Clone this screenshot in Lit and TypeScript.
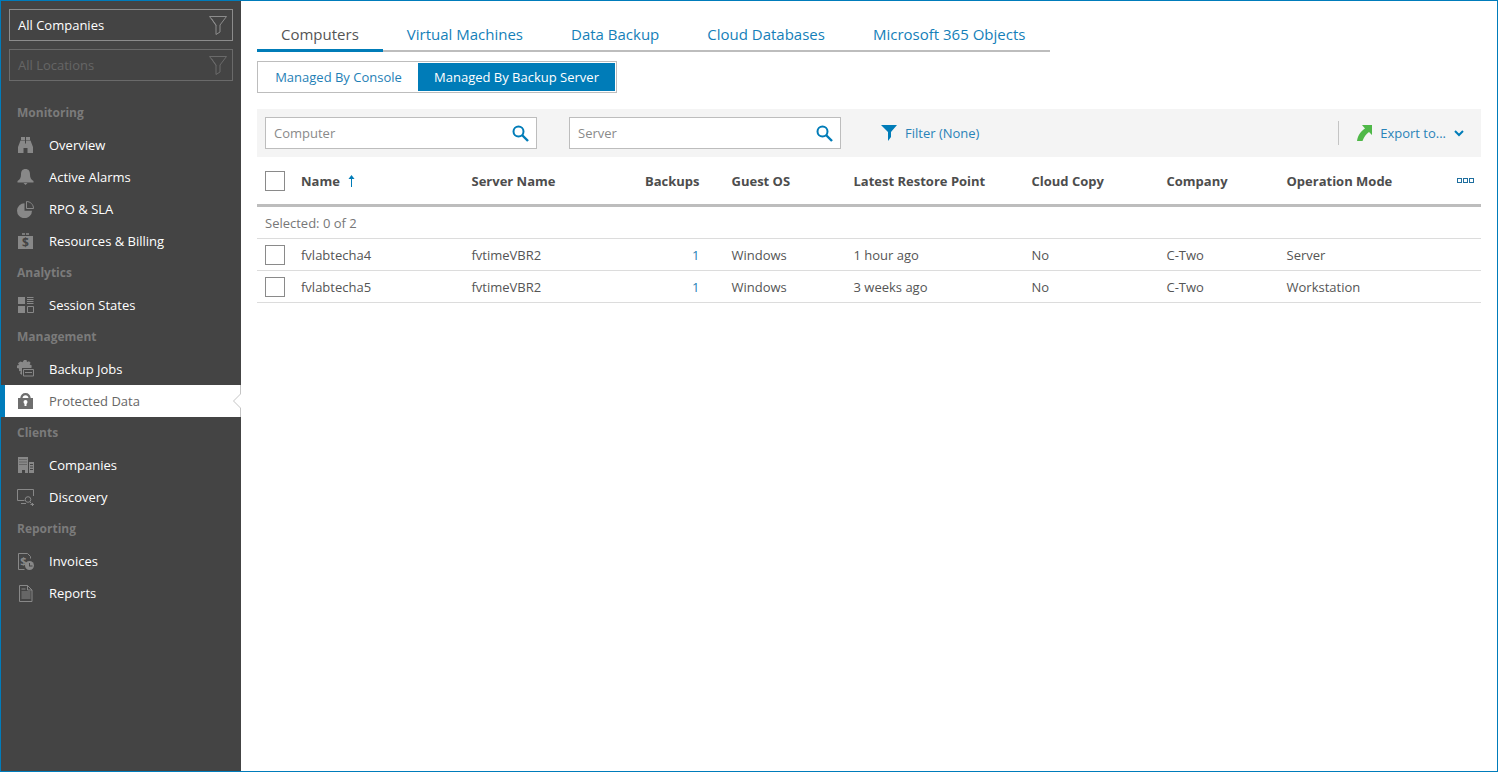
import { LitElement, html, css, svg } from "lit";
import { customElement } from "lit/decorators.js";

const G = "#888888";
const icons: Record<string, unknown> = {
  overview: svg`<path d="M4 1h4v3H4zM9 1h4v3H9z"/><path d="M3.500 4.500h4.500v3h1v-3h4.500L16 11v6h-5.500v-5h-4v5H1v-6z"/>`,
  alarms: svg`<path d="M8.500 1c3.200 0 4.500 2.200 4.500 5.500 0 3 .8 4.700 3.500 6.500v1.500H.5V13C3.200 11.200 4 9.500 4 6.500 4 3.200 5.300 1 8.500 1z"/><path d="M6.500 15h4l-2 2z"/>`,
  rpo: svg`<path d="M7.500 3v7.500H15A7.500 7.500 0 1 1 7.500 3z" transform="translate(0 .200)"/><path d="M9.500 1.500c3.800 0 7 3 7 7h-7z" fill="none" stroke="${G}"/>`,
  billing: svg`<path d="M5 1h3v2H5zM9 1h3v2H9z" opacity=".8"/><path d="M1 4h15v13H1z"/><text x="8.500" y="15" font-size="12" font-family="Open Sans" font-weight="700" text-anchor="middle" fill="#444">$</text>`,
  states: svg`<path d="M1 1h7v7H1zM1 10h7v7H1z"/><path d="M10 1.500h6.500M10 3.500h6.500M10 5.500h6.500M10 7.500h6.500" stroke="${G}" fill="none"/><path d="M10.500 10.500h6v6h-6z" stroke="${G}" fill="none"/>`,
  jobs: svg`<path d="M7 0h2.500l.5 2 2-.8 1.600 1.600-1 1.800 2 .6v2.500l-1.500.5L13 13l-2.500 1-.5 2H7l-.5-2-2 .8L3 13.200l1-1.800-2-.5V8.500l-2-.5V5.500l2-.5-1-1.800L3.500 1.500l2 .8z"/><path d="M5 8h12v9H5z" fill="#444"/><path d="M6.500 9.500h10v6.500h-10z" fill="none" stroke="${G}"/><path d="M8 12.500h7" stroke="${G}" fill="none"/>`,
  lock: svg`<path d="M8.500 1C5.500 1 3.500 3 3.300 6H1v11h15V6h-2.300C13.500 3 11.500 1 8.500 1zm0 2.200c1.600 0 2.800 1.100 3 2.800h-6c.2-1.700 1.400-2.800 3-2.800z"/><circle cx="8.500" cy="10" r="2" fill="#fff"/><path d="M7.500 10h2v4h-2z" fill="#fff"/>`,
  companies: svg`<path d="M1 1h10v16H8v-3H5v3H1zM12 6h5v11h-5z"/><path d="M2.500 3h1v1h-1zM4.500 3h1v1h-1zM6.500 3h1v1h-1zM8.500 3h1v1h-1zM2.500 5.500h1v1h-1zM4.500 5.500h1v1h-1zM6.500 5.500h1v1h-1zM8.500 5.500h1v1h-1zM2.500 8h1v1h-1zM4.500 8h1v1h-1zM6.500 8h1v1h-1zM8.500 8h1v1h-1zM13 8h3v1h-3zM13 10.500h3v1h-3zM13 13h3v1h-3z" fill="#444"/>`,
  discovery: svg`<g fill="none" stroke="${G}"><path d="M16.500 8V1.500H.5v11h7"/><path d="M4 15.500h5"/><circle cx="11" cy="11.500" r="2.800"/><path d="M13 14l1.500 1.500M13.500 16.500h3.500M15.500 15v3"/></g>`,
  invoices: svg`<g fill="none" stroke="${G}"><path d="M7.500 17.500h-6v-16h9l3 3v2"/></g><text x="6.500" y="13" font-size="11" font-family="Open Sans" font-weight="700" text-anchor="middle" fill="${G}">$</text><circle cx="12.500" cy="13.500" r="4.500"/><path d="M12 11h1v2.500h2.500v1H12z" fill="#444"/>`,
  reports: svg`<g fill="none" stroke="${G}"><path d="M2.500 1.500h8l4.500 4.500v11.500H2.500z"/><path d="M10.500 1.500V6H15"/><path d="M4.500 5h4M4.500 8h9M4.500 10h9M4.500 12h9M4.500 14h9" /></g>`,
};

const funnel = svg`<svg class="funnel" width="18" height="19" viewBox="0 0 18 19"><path d="M.500 .500h17L11 9v7l-4 2.500V9zM7 9.500 2.500 2.500" fill="none" stroke="currentColor"/></svg>`;
const search = svg`<svg class="search" width="17" height="17" viewBox="0 0 17 17"><circle cx="6.500" cy="6.500" r="5" fill="none" stroke="#007cb8" stroke-width="2"/><path d="M10 10l6 6" stroke="#007cb8" stroke-width="2.400" fill="none"/></svg>`;

const nav = [
  { group: "Monitoring", items: [["Overview", "overview"], ["Active Alarms", "alarms"], ["RPO & SLA", "rpo"], ["Resources & Billing", "billing"]] },
  { group: "Analytics", items: [["Session States", "states"]] },
  { group: "Management", items: [["Backup Jobs", "jobs"], ["Protected Data", "lock"]] },
  { group: "Clients", items: [["Companies", "companies"], ["Discovery", "discovery"]] },
  { group: "Reporting", items: [["Invoices", "invoices"], ["Reports", "reports"]] },
];

const tabs = ["Computers", "Virtual Machines", "Data Backup", "Cloud Databases", "Microsoft 365 Objects"];
const rows = [
  ["fvlabtecha4", "fvtimeVBR2", "1", "Windows", "1 hour ago", "No", "C-Two", "Server"],
  ["fvlabtecha5", "fvtimeVBR2", "1", "Windows", "3 weeks ago", "No", "C-Two", "Workstation"],
];

@customElement("app-root")
export class AppRoot extends LitElement {
  static styles = css`
    :host { display: block; height: 772px; font-family: "Open Sans", sans-serif; font-size: 13px; color: #555; }
    * { box-sizing: border-box; }
    .window { display: flex; height: 772px; border: 1px solid #007cbb; background: #fff; }
    .side { width: 240px; flex: none; background: #444; padding-top: 8px; }
    .select { display: flex; align-items: center; justify-content: space-between; height: 32px; margin: 0 8px 8px; padding: 0 5px 0 8px; border: 1px solid #8c8c8c; color: #fff; }
    .select.off { border-color: #6a6a6a; color: #666; margin-bottom: 0; }
    .select.off .funnel { color: #6a6a6a; }
    .funnel { color: #8c8c8c; }
    .group, .item { display: flex; align-items: center; height: 32px; }
    .nav { padding-top: 16px; }
    .group { padding: 0 0 1px 16px; color: #7b7b7b; font-weight: 700; font-size: 12px; }
    .item { padding-left: 16px; color: #fff; position: relative; }
    .item > svg.ico { width: 17px; height: 18px; margin-right: 15px; fill: #888888; flex: none; }
    .item.on { background: #fff; color: #666; border-left: 4px solid #007cbb; padding-left: 12px; }
    .item.on > svg.ico { fill: #6e6e6e; }
    .notch { position: absolute; right: 0; top: 0; width: 9px; height: 32px; }
    .main { flex: 1; min-width: 0; padding: 18px 16px 0; }
    .tabs { display: inline-flex; height: 33px; border-bottom: 2px solid #bdbdbd; padding-right: 1px; }
    .tab { padding: 5px 24px 0; font-size: 15px; color: #157fb9; height: 33px; }
    .tab.on { color: #555; border-bottom: 3px solid #007cb8; }
    .toggle { display: flex; width: 360px; height: 32px; margin-top: 9px; padding: 1px; border: 1px solid #bdbdbd; }
    .toggle div { display: flex; align-items: center; justify-content: center; color: #1f7fb6; width: 159px; }
    .toggle div.on { width: 197px; background: #007cb8; color: #fff; }
    .bar { display: flex; align-items: center; height: 48px; margin-top: 16px; padding: 0 17px 0 8px; background: #f4f4f4; }
    .input { display: flex; align-items: center; justify-content: space-between; width: 272px; height: 32px; margin-right: 32px; padding: 0 7px 0 8px; background: #fff; border: 1px solid #bdbdbd; color: #8a8a8a; }
    .filter { display: flex; align-items: center; gap: 8px; margin-left: 8px; color: #2a83b8; }
    .export { display: flex; align-items: center; margin-left: auto; height: 24px; border-left: 1px solid #c4c4c4; padding-left: 18px; color: #2a83b8; }
    .export .arrow { margin-right: 8px; }
    .export .chev { margin-left: 8px; }
    .row { display: grid; grid-template-columns: 36px 170.5px 164px 96px 122px 178px 135px 120px 170.5px 32px; align-items: center; height: 32px; border-bottom: 1px solid #dcdcdc; }
    .row > div { padding-left: 8px; white-space: nowrap; }
    .row > .num { text-align: right; padding: 0 24px 0 0; color: #1f7fb6; }
    .head { height: 50px; border-bottom: 3px solid #bdbdbd; font-weight: 700; color: #4d4d4d; }
    .head > .num { color: #4d4d4d; }
    .sel { display: flex; align-items: center; height: 32px; padding-left: 8px; color: #777; border-bottom: 1px solid #dcdcdc; }
    .check { display: block; width: 20px; height: 20px; border: 1px solid #8a8a8a; background: #fff; }
    .name { display: flex; align-items: center; gap: 8px; }
    .dots { display: flex; gap: 1px; padding-left: 8px; }
    .dots i { display: block; width: 5px; height: 5px; border: 1px solid #1f6f9f; }
  `;

  render() {
    return html`<div class="window">
      <aside class="side">
        <div class="select"><span>All Companies</span>${funnel}</div>
        <div class="select off"><span>All Locations</span>${funnel}</div>
        <div class="nav">
          ${nav.map(
            (g) => html`<div class="group">${g.group}</div>
              ${g.items.map(
                ([label, icon]) => html`<div class="item ${label === "Protected Data" ? "on" : ""}">
                  <svg class="ico" viewBox="0 0 17 18">${icons[icon]}</svg><span>${label}</span>
                  ${label === "Protected Data"
                    ? html`<svg class="notch" viewBox="0 0 9 32"><path d="M8.500 0V9L1.500 16l7 7v9" fill="none" stroke="#c4c4c4"/></svg>`
                    : ""}
                </div>`
              )}`
          )}
        </div>
      </aside>
      <main class="main">
        <div class="tabs">${tabs.map((t, i) => html`<div class="tab ${i === 0 ? "on" : ""}">${t}</div>`)}</div>
        <div class="toggle"><div>Managed By Console</div><div class="on">Managed By Backup Server</div></div>
        <div class="bar">
          <div class="input"><span>Computer</span>${search}</div>
          <div class="input"><span>Server</span>${search}</div>
          <div class="filter">
            <svg width="16" height="16" viewBox="0 0 16 16"><path d="M0 0h16L10 7v5l-3 4V7z" fill="#007cb8"/></svg>
            <span>Filter (None)</span>
          </div>
          <div class="export">
            <svg class="arrow" width="15" height="16" viewBox="0 0 15 16"><path d="M5 0h10v10l-3-3c-3 2-5 5-6.500 9H0C1 10 4 6 8 3.500z" fill="#4fb848"/></svg>
            <span>Export to...</span>
            <svg class="chev" width="10" height="7" viewBox="0 0 10 7"><path d="M1 1l4 4 4-4" fill="none" stroke="#007cb8" stroke-width="2"/></svg>
          </div>
        </div>
        <div class="row head">
          <div><span class="check"></span></div>
          <div class="name">Name
            <svg width="7" height="12" viewBox="0 0 7 12"><path d="M3.500 1v11" stroke="#007cb8" fill="none"/><path d="M3.500 0L6.500 4h-6z" fill="#007cb8"/></svg>
          </div>
          <div>Server Name</div><div class="num">Backups</div><div>Guest OS</div>
          <div>Latest Restore Point</div><div>Cloud Copy</div><div>Company</div><div>Operation Mode</div>
          <div class="dots"><i></i><i></i><i></i></div>
        </div>
        <div class="sel">Selected: 0 of 2</div>
        ${rows.map(
          (r) => html`<div class="row">
            <div><span class="check"></span></div>
            <div>${r[0]}</div><div>${r[1]}</div><div class="num">${r[2]}</div>
            <div>${r[3]}</div><div>${r[4]}</div><div>${r[5]}</div><div>${r[6]}</div><div>${r[7]}</div><div></div>
          </div>`
        )}
      </main>
    </div>`;
  }
}
